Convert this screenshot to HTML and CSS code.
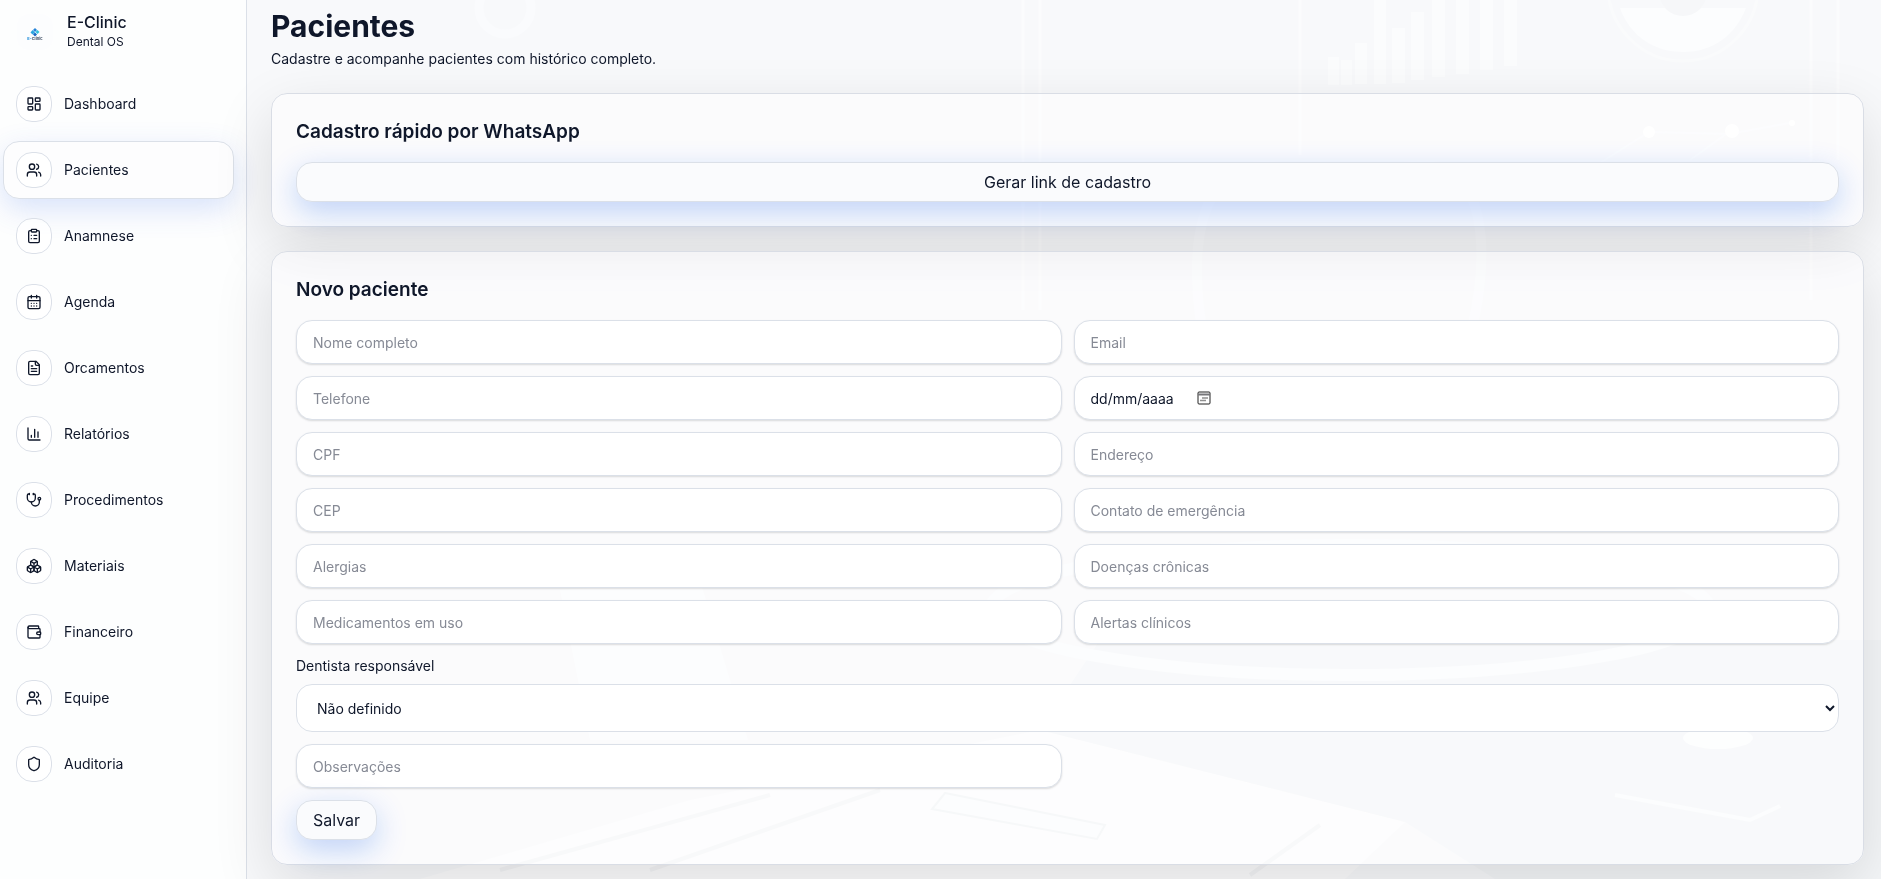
FILE: index.html
```html
<!DOCTYPE html>
<html lang="pt-BR">
<head>
    <meta charset="UTF-8">
    <meta name="viewport" content="width=device-width, initial-scale=1.0">
    <title>E-Clinic - Pacientes</title>
    <link rel="stylesheet" href="styles.css">
</head>
<body>
    <svg class="backdrop" viewBox="0 0 1881 879" preserveAspectRatio="xMidYMid slice" aria-hidden="true">
        <!-- desk -->
        <path d="M247 640h250l60 239H247z" fill="#f8f9fb"/>
        <path d="M560 590l140-10 48 160H590z" fill="#fbfcfd"/>
        <path d="M690 800L1040 730l365 92-60 57H420z" fill="#fcfcfd"/>
        <path d="M1040 730l365 92 90 57h386V640H1100z" fill="#f4f6f8"/>
        <path d="M945 793l160 32-8 14-165-30z" fill="#fbfcfd" stroke="#f1f3f5" stroke-width="2"/>
        <path d="M770 795L500 870M880 790L650 870M1320 825l-70 50" fill="none" stroke="#f4f5f7" stroke-width="4"/>
        <ellipse cx="1718" cy="738" rx="35" ry="11" fill="#fcfdfe"/>
        <path d="M1615 795l135 25 30-14" fill="none" stroke="#fafcfd" stroke-width="4"/>
        <ellipse cx="1350" cy="610" rx="360" ry="65" fill="none" stroke="#fafcfe" stroke-width="12"/>
        <!-- screen and charts -->
        <path d="M1023 0v310M1040 0v310M1300 0v155" stroke="#fbfcfd" stroke-width="3"/>
        <path d="M1811 0v300M1838 0v160" stroke="#fbfcfd" stroke-width="3"/>
        <path d="M1328 57h11v28h-11zM1341 60h11v25h-11zM1355 43h12v41h-12zM1374 0h12v84h-12zM1392 28h13v55h-13zM1411 12h13v68h-13zM1432 0h13v77h-13zM1456 0h13v74h-13zM1480 0h13v70h-13zM1504 0h13v66h-13z" fill="#fbfcfd"/>
        <path d="M1202 330c-14-90 0-162 60-164 40 0 52 10 80 10s50-12 90-10c48 4 60 74 40 164" fill="none" stroke="#fafbfd" stroke-width="10"/>
        <circle cx="1683" cy="-14" r="75" fill="none" stroke="#fafbfc" stroke-width="3"/>
        <path d="M1620 8l126 0c-10 26-32 44-63 44s-54-18-63-44z" fill="#fcfdfe"/>
        <circle cx="1683" cy="-8" r="24" fill="#f6f7f9"/>
        <circle cx="505" cy="8" r="26" fill="none" stroke="#fafbfd" stroke-width="9"/>
        <path d="M1581 175l68-43 80 2 66-12M1690 160l39-28" fill="none" stroke="#fafbfd" stroke-width="2"/>
        <g fill="#ffffff">
            <circle cx="1649" cy="132" r="6"/>
            <circle cx="1732" cy="131" r="7"/>
            <circle cx="1792" cy="123" r="3"/>
        </g>
    </svg>

    <div class="layout">
        <aside class="sidebar">
            <div class="brand">
                <svg class="brand-logo" viewBox="0 0 36 36" role="img" aria-label="E-Clinic">
                    <path d="M18 14l2 2-2 2-2-2z" fill="#2583d8"/>
                    <path d="M15.500 16l2.500 2.500-2.500 2-2-2z" fill="#2aa5e0"/>
                    <path d="M20.500 16l2 2-2 2-2-2z" fill="#31c2df"/>
                    <path d="M18 18.500l2 2-2 2-2-2z" fill="#1766c2"/>
                    <text x="18" y="26" text-anchor="middle" class="brand-mark"><tspan fill="#1689d8">E-</tspan>Clinic</text>
                </svg>
                <div class="brand-text">
                    <strong>E-Clinic</strong>
                    <span>Dental OS</span>
                </div>
            </div>

            <nav class="nav">
                <a href="#" class="nav-item">
                    <span class="nav-icon"><svg viewBox="0 0 24 24"><rect x="3" y="3" width="7" height="9" rx="1"/><rect x="14" y="3" width="7" height="5" rx="1"/><rect x="14" y="12" width="7" height="9" rx="1"/><rect x="3" y="16" width="7" height="5" rx="1"/></svg></span>
                    Dashboard
                </a>
                <a href="#" class="nav-item active">
                    <span class="nav-icon"><svg viewBox="0 0 24 24"><path d="M16 21v-2a4 4 0 0 0-4-4H6a4 4 0 0 0-4 4v2"/><circle cx="9" cy="7" r="4"/><path d="M22 21v-2a4 4 0 0 0-3-3.870"/><path d="M16 3.130a4 4 0 0 1 0 7.750"/></svg></span>
                    Pacientes
                </a>
                <a href="#" class="nav-item">
                    <span class="nav-icon"><svg viewBox="0 0 24 24"><rect x="8" y="2" width="8" height="4" rx="1"/><path d="M16 4h2a2 2 0 0 1 2 2v14a2 2 0 0 1-2 2H6a2 2 0 0 1-2-2V6a2 2 0 0 1 2-2h2"/><path d="M12 11h4M12 16h4M8 11h.01M8 16h.01"/></svg></span>
                    Anamnese
                </a>
                <a href="#" class="nav-item">
                    <span class="nav-icon"><svg viewBox="0 0 24 24"><path d="M8 2v4M16 2v4"/><rect x="3" y="4" width="18" height="18" rx="2"/><path d="M3 10h18M8 14h.01M12 14h.01M16 14h.01M8 18h.01M12 18h.01M16 18h.01"/></svg></span>
                    Agenda
                </a>
                <a href="#" class="nav-item">
                    <span class="nav-icon"><svg viewBox="0 0 24 24"><path d="M15 2H6a2 2 0 0 0-2 2v16a2 2 0 0 0 2 2h12a2 2 0 0 0 2-2V7z"/><path d="M14 2v4a2 2 0 0 0 2 2h4M10 9H8M16 13H8M16 17H8"/></svg></span>
                    Orcamentos
                </a>
                <a href="#" class="nav-item">
                    <span class="nav-icon"><svg viewBox="0 0 24 24"><path d="M3 3v16a2 2 0 0 0 2 2h16"/><path d="M18 17V9M13 17V5M8 17v-3"/></svg></span>
                    Relatórios
                </a>
                <a href="#" class="nav-item">
                    <span class="nav-icon"><svg viewBox="0 0 24 24"><path d="M11 2v2M5 2v2"/><path d="M5 3H4a2 2 0 0 0-2 2v4a6 6 0 0 0 12 0V5a2 2 0 0 0-2-2h-1"/><path d="M8 15a6 6 0 0 0 12 0v-3"/><circle cx="20" cy="10" r="2"/></svg></span>
                    Procedimentos
                </a>
                <a href="#" class="nav-item">
                    <span class="nav-icon"><svg viewBox="0 0 24 24"><path d="M2.970 12.920A2 2 0 0 0 2 14.630v3.240a2 2 0 0 0 .970 1.710l3 1.800a2 2 0 0 0 2.060 0L12 19v-5.500l-5-3-4.030 2.420Z"/><path d="m7 16.500-4.740-2.850M7 16.500l5-3M7 16.500v5.170"/><path d="M12 13.500V19l3.970 2.380a2 2 0 0 0 2.060 0l3-1.800a2 2 0 0 0 .970-1.710v-3.240a2 2 0 0 0-.970-1.710L17 10.500l-5 3Z"/><path d="m17 16.500-5-3M17 16.500l4.740-2.850M17 16.500v5.170"/><path d="M7.970 4.420A2 2 0 0 0 7 6.130v4.370l5 3 5-3V6.130a2 2 0 0 0-.970-1.710l-3-1.800a2 2 0 0 0-2.060 0l-3 1.800Z"/><path d="M12 8 7.260 5.150M12 8l4.740-2.850M12 13.500V8"/></svg></span>
                    Materiais
                </a>
                <a href="#" class="nav-item">
                    <span class="nav-icon"><svg viewBox="0 0 24 24"><path d="M19 7V4a1 1 0 0 0-1-1H5a2 2 0 0 0 0 4h15a1 1 0 0 1 1 1v4h-3a2 2 0 0 0 0 4h3a1 1 0 0 0 1-1v-2a1 1 0 0 0-1-1"/><path d="M3 5v14a2 2 0 0 0 2 2h15a1 1 0 0 0 1-1v-4"/></svg></span>
                    Financeiro
                </a>
                <a href="#" class="nav-item">
                    <span class="nav-icon"><svg viewBox="0 0 24 24"><path d="M16 21v-2a4 4 0 0 0-4-4H6a4 4 0 0 0-4 4v2"/><circle cx="9" cy="7" r="4"/><path d="M22 21v-2a4 4 0 0 0-3-3.870"/><path d="M16 3.130a4 4 0 0 1 0 7.750"/></svg></span>
                    Equipe
                </a>
                <a href="#" class="nav-item">
                    <span class="nav-icon"><svg viewBox="0 0 24 24"><path d="M20 13c0 5-3.500 7.500-7.660 8.950a1 1 0 0 1-.670-.010C7.500 20.500 4 18 4 13V6a1 1 0 0 1 1-1c2 0 4.500-1.200 6.240-2.720a1.170 1.170 0 0 1 1.520 0C14.510 3.810 17 5 19 5a1 1 0 0 1 1 1z"/></svg></span>
                    Auditoria
                </a>
            </nav>
        </aside>

        <main class="main">
            <header class="page-header">
                <h1>Pacientes</h1>
                <p>Cadastre e acompanhe pacientes com histórico completo.</p>
            </header>

            <section class="card">
                <h2>Cadastro rápido por WhatsApp</h2>
                <button type="button" class="btn btn-block">Gerar link de cadastro</button>
            </section>

            <section class="card">
                <h2>Novo paciente</h2>
                <form class="form-grid">
                    <input class="input" type="text" placeholder="Nome completo" aria-label="Nome completo">
                    <input class="input" type="email" placeholder="Email" aria-label="Email">
                    <input class="input" type="tel" placeholder="Telefone" aria-label="Telefone">
                    <div class="input date-field">
                        <input type="text" value="dd/mm/aaaa" aria-label="Data de nascimento">
                        <button type="button" class="date-button" aria-label="Abrir calendário">
                            <svg viewBox="0 0 14 14"><rect x="1" y="1" width="12" height="12" rx="1"/><path d="M1 3.500h12" stroke-width="2" stroke="#77777a"/><path d="M5.500 7h1M7.500 7h1M9.500 7h1M3.500 9.500h1M5.500 9.500h1M7.500 9.500h1" stroke-width="1.500"/></svg>
                        </button>
                    </div>
                    <input class="input" type="text" placeholder="CPF" aria-label="CPF">
                    <input class="input" type="text" placeholder="Endereço" aria-label="Endereço">
                    <input class="input" type="text" placeholder="CEP" aria-label="CEP">
                    <input class="input" type="text" placeholder="Contato de emergência" aria-label="Contato de emergência">
                    <input class="input" type="text" placeholder="Alergias" aria-label="Alergias">
                    <input class="input" type="text" placeholder="Doenças crônicas" aria-label="Doenças crônicas">
                    <input class="input" type="text" placeholder="Medicamentos em uso" aria-label="Medicamentos em uso">
                    <input class="input" type="text" placeholder="Alertas clínicos" aria-label="Alertas clínicos">
                    <div class="field-full">
                        <label for="dentista">Dentista responsável</label>
                        <select id="dentista" class="select">
                            <option>Não definido</option>
                        </select>
                    </div>
                    <input class="input" type="text" placeholder="Observações" aria-label="Observações">
                    <div class="form-actions">
                        <button type="submit" class="btn">Salvar</button>
                    </div>
                </form>
            </section>
        </main>
    </div>
</body>
</html>
```
FILE: styles.css
```css
* {
    box-sizing: border-box;
}

body {
    margin: 0;
    font-family: Inter, "Liberation Sans", sans-serif;
    font-size: 14px;
    line-height: 20px;
    color: #0f172a;
    background: #f8f9fb;
}

h1, h2, p {
    margin: 0;
}

.backdrop {
    position: fixed;
    inset: 0;
    width: 100%;
    height: 100%;
    z-index: -1;
}

.layout {
    display: flex;
    min-height: 100vh;
}

/* sidebar */
.sidebar {
    width: 247px;
    flex-shrink: 0;
    padding: 8px 12px 16px 3px;
    background: rgba(255, 255, 255, 0.75);
    border-right: 1px solid #dbe0e8;
}

.brand {
    display: flex;
    align-items: center;
    gap: 14px;
    height: 48px;
    padding-left: 14px;
    margin-bottom: 19px;
}

.brand-logo {
    width: 36px;
    height: 36px;
    border-radius: 12px;
    background: #fcfdfe;
}

.brand-mark {
    font-size: 4px;
    font-weight: 700;
    fill: #475569;
}

.brand-text strong {
    display: block;
    font-size: 16px;
    font-weight: 500;
}

.brand-text span {
    display: block;
    font-size: 12px;
    line-height: 20px;
}

.nav {
    display: flex;
    flex-direction: column;
    gap: 8px;
}

.nav-item {
    display: flex;
    align-items: center;
    gap: 12px;
    padding: 10px 12px;
    border: 1px solid transparent;
    border-radius: 16px;
    color: #0f172a;
    text-decoration: none;
}

.nav-item.active {
    background: #fdfdfe;
    border-color: #dbe0e8;
    box-shadow: 0 10px 30px rgba(37, 99, 235, 0.18);
}

.nav-icon {
    display: flex;
    align-items: center;
    justify-content: center;
    width: 36px;
    height: 36px;
    border: 1px solid #dbe0e8;
    border-radius: 16px;
    background: rgba(255, 255, 255, 0.7);
}

.nav-icon svg {
    width: 16px;
    height: 16px;
    fill: none;
    stroke: currentColor;
    stroke-width: 2;
    stroke-linecap: round;
    stroke-linejoin: round;
}

/* content */
.main {
    flex: 1;
    min-width: 0;
    padding: 8px 17px 14px 24px;
    display: flex;
    flex-direction: column;
    gap: 24px;
}

.page-header h1 {
    font-size: 30px;
    line-height: 36px;
    font-weight: 700;
    margin-bottom: 5px;
}

.card {
    padding: 24px;
    border: 1px solid #d9dde5;
    border-radius: 16px;
    background: rgba(255, 255, 255, 0.4);
    box-shadow: 0 20px 60px rgba(0, 0, 0, 0.12);
}

.card h2 {
    font-size: 19px;
    line-height: 28px;
    font-weight: 600;
    margin-bottom: 16px;
}

.btn {
    height: 40px;
    padding: 0 16px;
    border: 1px solid #dbe0e8;
    border-radius: 16px;
    background: #fafbfd;
    box-shadow: 0 10px 30px rgba(37, 99, 235, 0.28);
    font-family: inherit;
    font-size: 16px;
    font-weight: 400;
    color: #0f172a;
    cursor: pointer;
}

.btn-block {
    display: block;
    width: 100%;
}

.form-grid {
    display: grid;
    grid-template-columns: 1fr 1fr;
    gap: 12px;
}

.input {
    width: 100%;
    height: 44px;
    padding: 0 16px;
    border: 1px solid #dbe0e8;
    border-radius: 16px;
    background: #ffffff;
    box-shadow: 0 1px 2px rgba(0, 0, 0, 0.14);
    font-family: inherit;
    font-size: 14px;
    color: #0f172a;
}

.input::placeholder {
    color: #868a95;
}

.date-field {
    display: flex;
    align-items: center;
    gap: 8px;
}

.date-field input {
    width: 98px;
    padding: 0;
    border: 0;
    background: none;
    font-family: inherit;
    font-size: 14px;
    color: inherit;
}

.date-button {
    display: flex;
    padding: 0;
    border: 0;
    background: none;
    cursor: pointer;
}

.date-button svg {
    width: 14px;
    height: 14px;
    fill: none;
    stroke: #222222;
}

.field-full {
    grid-column: 1 / -1;
}

.field-full label {
    display: block;
    margin-bottom: 8px;
}

.select {
    display: block;
    width: 100%;
    height: 48px;
    padding: 0 0 0 16px;
    border: 1px solid #dbe0e8;
    border-radius: 16px;
    background: #ffffff;
    font-family: inherit;
    font-size: 14px;
    color: #0f172a;
}

.form-actions {
    grid-column: 1 / -1;
}
```
